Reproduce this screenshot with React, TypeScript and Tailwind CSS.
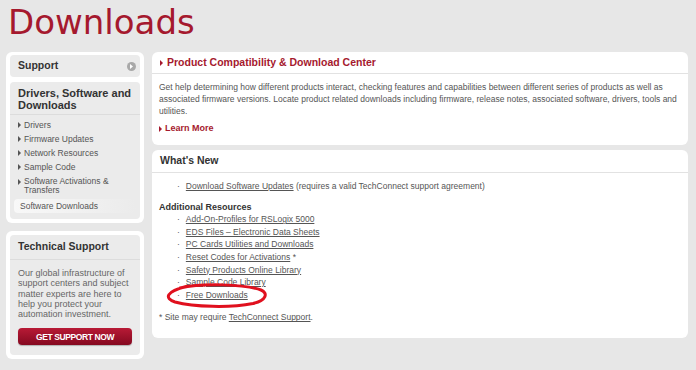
import React from "react";

const body = { fontFamily: '"Liberation Sans", Arial, sans-serif' };
const title = { fontFamily: '"DejaVu Sans", Verdana, sans-serif' };

function Tri({ className = "" }: { className?: string }) {
  return (
    <svg width="3" height="6" viewBox="0 0 3 6" className={className}>
      <path d="M0 0L3 3L0 6Z" fill="currentColor" />
    </svg>
  );
}

const sideLinks = ["Drivers", "Firmware Updates", "Network Resources", "Sample Code"];

const resources = [
  { label: "Add-On-Profiles for RSLogix 5000" },
  { label: "EDS Files – Electronic Data Sheets" },
  { label: "PC Cards Utilities and Downloads" },
  { label: "Reset Codes for Activations", star: true },
  { label: "Safety Products Online Library" },
  { label: "Sample Code Library" },
  { label: "Free Downloads" },
];

function Sidebar() {
  return (
    <div className="flex flex-col gap-2 w-[138px] shrink-0">
      {/* Support nav */}
      <div className="bg-white rounded-md p-1 pt-[3px] flex flex-col gap-[5px]">
        <div className="bg-[#ebebeb] rounded-[4px] h-[22px] flex items-center justify-between pl-2 pr-[4px]">
          <span className="text-[10.5px] font-bold text-[#333]">Support</span>
          <span className="w-[9px] h-[9px] rounded-full bg-[#a9a9a9] flex items-center justify-center text-white">
            <svg width="3" height="5" viewBox="0 0 3 5"><path d="M0 0L3 2.5L0 5Z" fill="currentColor" /></svg>
          </span>
        </div>
        <div className="bg-[#ebebeb] rounded-[4px] pb-[6px]">
          <div className="pl-2 pr-1 pt-[5px] pb-[3px] border-b border-[#dcdcdc] text-[11px] leading-[12px] font-bold text-[#333]">
            Drivers, Software and<br />Downloads
          </div>
          <ul className="px-2 pt-[3px] text-[8.5px] text-[#555]">
            {sideLinks.map((l) => (
              <li key={l} className="flex items-center gap-[3px] h-[14px]">
                <Tri className="text-[#555]" />
                <span>{l}</span>
              </li>
            ))}
            <li className="flex gap-[3px] leading-[9px] pt-[3px] pb-[4px]">
              <Tri className="text-[#555] mt-[2px] shrink-0" />
              <span>Software Activations &amp; Transfers</span>
            </li>
            <li className="h-[14px] flex items-center pl-[6px] -mx-1 rounded-sm bg-gradient-to-r from-[#f8f8f8] to-[#ebebeb]">
              Software Downloads
            </li>
          </ul>
        </div>
      </div>

      {/* Technical support */}
      <div className="bg-white rounded-md p-1">
        <div className="bg-[#ebebeb] rounded-[4px] pb-[10px]">
          <div className="px-2 h-[25px] flex items-center border-b border-[#dcdcdc] text-[10.5px] font-bold text-[#333]">
            Technical Support
          </div>
          <p className="px-2 pt-[8px] text-[9px] leading-[10.3px] text-[#666]">
            Our global infrastructure of support centers and subject matter experts are here to help you protect your automation investment.
          </p>
          <div className="flex px-2 pt-[9px]">
            <button className="block w-full h-[17px] rounded-[4px] bg-gradient-to-b from-[#b81a36] to-[#850920] text-white text-[8.5px] font-bold tracking-[-0.4px] shadow-[0_1px_1px_rgba(0,0,0,0.25)]">
              GET SUPPORT NOW
            </button>
          </div>
        </div>
      </div>
    </div>
  );
}

function Link({ children }: { children: React.ReactNode }) {
  return <span className="underline text-[#555] underline-offset-1">{children}</span>;
}

export default function App() {
  return (
    <div className="w-[696px] h-[370px] bg-[#e7e7e7] overflow-hidden" style={body}>
      <h1 className="text-[#a5192e] text-[34px] leading-none pl-2 pt-[5px] h-[52px]" style={title}>
        Downloads
      </h1>
      <div className="flex gap-2 px-[6px]">
        <Sidebar />
        <div className="flex-1 flex flex-col gap-[5px] mr-[2px]">
          {/* Product compatibility */}
          <div className="bg-white rounded-md h-[93px]">
            <div className="h-[22px] border-b border-[#e2e2e2] flex items-center gap-[4px] px-2 text-[#a5192e]">
              <Tri />
              <span className="text-[10.5px] font-bold">Product Compatibility &amp; Download Center</span>
            </div>
            <p className="pl-[7px] pr-[10px] pt-[7px] text-[8.5px] leading-[12px] text-[#555]">
              Get help determining how different products interact, checking features and capabilities between different series of products as well as associated firmware versions. Locate product related downloads including firmware, release notes, associated software, drivers, tools and utilities.
            </p>
            <div className="px-[7px] pt-[5px] flex items-center gap-[3px] text-[#a5192e] text-[9px] font-bold">
              <Tri />
              <span>Learn More</span>
            </div>
          </div>

          {/* What's New */}
          <div className="bg-white rounded-md h-[188px] relative">
            <div className="h-[23px] border-b border-[#e2e2e2] flex items-center px-2 text-[10.5px] font-bold text-[#333]">
              What&apos;s New
            </div>
            <div className="px-[7px] pt-[7px] text-[8.5px] leading-[12.6px] text-[#555]">
              <ul className="pl-[18px]">
                <li className="flex gap-[6px]">
                  <span>·</span>
                  <span><Link>Download Software Updates</Link> (requires a valid TechConnect support agreement)</span>
                </li>
              </ul>
              <div className="font-bold text-[#333] text-[9px] mt-[8px]">Additional Resources</div>
              <ul className="pl-[18px]">
                {resources.map((r) => (
                  <li key={r.label} className="flex gap-[6px]">
                    <span>·</span>
                    <span><Link>{r.label}</Link>{r.star ? " *" : ""}</span>
                  </li>
                ))}
              </ul>
              <p className="mt-[10px]">* Site may require <Link>TechConnect Support</Link>.</p>
            </div>
            {/* hand-drawn highlight */}
            <svg className="absolute left-[12px] top-[133px]" width="104" height="25" viewBox="0 0 104 25">
              <path d="M16 5C38 0 80 1 97 7C104 10 103 17 89 20.5C66 25 30 24 11 19C0 15.5 2 8.5 22 3.5" fill="none" stroke="#e0101e" strokeWidth="3" strokeLinecap="round" />
            </svg>
          </div>
        </div>
      </div>
    </div>
  );
}
